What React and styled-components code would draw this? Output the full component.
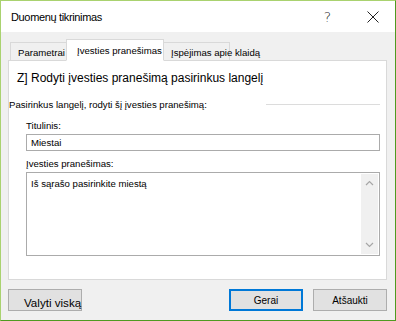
import React from 'react';
import styled, { createGlobalStyle } from 'styled-components';

const GlobalStyle = createGlobalStyle`
  html, body {
    margin: 0;
    padding: 0;
    background: #ffffff;
  }
  body {
    font-family: "Liberation Sans", Arial, sans-serif;
    color: #000;
  }
`;

const Window = styled.div`
  width: 396px;
  height: 321px;
  box-sizing: border-box;
  border: 1px solid;
  border-color: #a9d26f #4f9a20 #4f9a20 #a9d26f;
  background: #f0f0f0;
  display: flex;
  flex-direction: column;
`;

const TitleBar = styled.div`
  height: 31px;
  background: #ffffff;
  display: flex;
  align-items: center;
  padding-left: 10px;
`;

const Title = styled.span`
  font-size: 11px;
  letter-spacing: -0.35px;
  flex: 1;
  padding-top: 1px;
`;

const TitleButton = styled.div`
  width: 45px;
  height: 31px;
  display: flex;
  align-items: center;
  justify-content: center;
  font-size: 14px;
  color: #222;
  font-family: "DejaVu Sans", sans-serif;
  font-weight: 300;
`;

const Body = styled.div`
  flex: 1;
  display: flex;
  flex-direction: column;
  padding: 7px 8px 0 7px;
`;

const TabStrip = styled.div`
  display: flex;
  align-items: flex-end;
  height: 22px;
  margin-left: 2px;
  margin-bottom: -1px;
  position: relative;
  z-index: 1;
`;

const Tab = styled.div`
  box-sizing: border-box;
  width: ${(p) => p.$w}px;
  height: ${(p) => (p.$active ? 22 : 19)}px;
  padding-left: ${(p) => p.$pad}px;
  padding-top: ${(p) => (p.$active ? 5 : 4)}px;
  margin-right: -1px;
  border: 1px solid #d9d9d9;
  border-bottom-color: ${(p) => (p.$active ? '#ffffff' : '#d9d9d9')};
  background: ${(p) => (p.$active ? '#ffffff' : '#f0f0f0')};
  font-size: 9.6px;
  white-space: nowrap;
  position: relative;
  z-index: ${(p) => (p.$active ? 2 : 1)};
`;

const Panel = styled.div`
  height: 220px;
  box-sizing: border-box;
  border: 1px solid #d9d9d9;
  background: #ffffff;
  display: flex;
  flex-direction: column;
`;

const CheckRow = styled.div`
  margin: 10px 0 0 8px;
  font-size: 12px;
  line-height: 14px;
`;

const GroupRow = styled.div`
  display: flex;
  align-items: center;
  margin-top: 13px;
  height: 12px;
  font-size: 9.6px;
`;

const GroupLine = styled.div`
  margin-left: auto;
  margin-right: 6px;
  width: 114px;
  height: 1px;
  background: #dcdcdc;
`;

const FieldLabel = styled.div`
  margin: ${(p) => p.$top}px 0 0 17px;
  font-size: 9.6px;
  line-height: 12px;
`;

const TextBox = styled.div`
  box-sizing: border-box;
  margin: 2px 0 0 17px;
  width: 354px;
  height: ${(p) => p.$h}px;
  border: 1px solid #ababab;
  font-size: 9.6px;
  display: flex;
`;

const BoxText = styled.div`
  flex: 1;
  padding: ${(p) => p.$pad};
`;

const ScrollBar = styled.div`
  width: 17px;
  margin: 1px 1px 1px 0;
  background: #f0f0f0;
  display: flex;
  flex-direction: column;
  justify-content: space-between;
  align-items: center;
  padding: 6px 0;
`;

const Footer = styled.div`
  display: flex;
  margin-top: 9px;
  gap: 10px;
`;

const Button = styled.div`
  box-sizing: border-box;
  width: ${(p) => p.$w || 74}px;
  height: 22px;
  background: #e1e1e1;
  border: ${(p) => (p.$primary ? '2px solid #0078d7' : '1px solid #adadad')};
  font-size: ${(p) => p.$size || 10}px;
  display: flex;
  align-items: center;
  justify-content: ${(p) => (p.$left ? 'flex-start' : 'center')};
  padding-left: ${(p) => p.$pl || 0}px;
  padding-top: ${(p) => p.$pt || 0}px;
  white-space: nowrap;
  margin-left: ${(p) => (p.$push ? 'auto' : '0')};
`;

const Chevron = ({ up }) => (
  <svg width="9" height="6" viewBox="0 0 9 6">
    <path
      d={up ? 'M1 5 L4.5 1.5 L8 5' : 'M1 1 L4.5 4.5 L8 1'}
      fill="none"
      stroke="#a6a6a6"
      strokeWidth="1.2"
    />
  </svg>
);

const CloseIcon = () => (
  <svg width="12" height="12" viewBox="0 0 12 12">
    <path d="M0.5 0.5 L11.5 11.5 M11.5 0.5 L0.5 11.5" stroke="#222" strokeWidth="1" />
  </svg>
);

export default function App() {
  return (
    <>
      <GlobalStyle />
      <Window>
        <TitleBar>
          <Title>Duomenų tikrinimas</Title>
          <TitleButton>?</TitleButton>
          <TitleButton>
            <CloseIcon />
          </TitleButton>
        </TitleBar>
        <Body>
          <TabStrip>
            <Tab $w={57} $pad={7}>Parametrai</Tab>
            <Tab $w={98} $pad={10} $active>Įvesties pranešimas</Tab>
            <Tab $w={67} $pad={7}>Įspėjimas apie klaidą</Tab>
          </TabStrip>
          <Panel>
            <CheckRow>Z] Rodyti įvesties pranešimą pasirinkus langelį</CheckRow>
            <GroupRow>
              <span>Pasirinkus langelį, rodyti šį įvesties pranešimą:</span>
              <GroupLine />
            </GroupRow>
            <FieldLabel $top={10}>Titulinis:</FieldLabel>
            <TextBox $h={17}>
              <BoxText $pad="2px 4px">Miestai</BoxText>
            </TextBox>
            <FieldLabel $top={7}>Įvesties pranešimas:</FieldLabel>
            <TextBox $h={84}>
              <BoxText $pad="5px 4px">Iš sąrašo pasirinkite miestą</BoxText>
              <ScrollBar>
                <Chevron up />
                <Chevron />
              </ScrollBar>
            </TextBox>
          </Panel>
          <Footer>
            <Button $left $pl={15} $pt={4} $size={11.6}>Valyti viską</Button>
            <Button $primary $push>Gerai</Button>
            <Button>Atšaukti</Button>
          </Footer>
        </Body>
      </Window>
    </>
  );
}
